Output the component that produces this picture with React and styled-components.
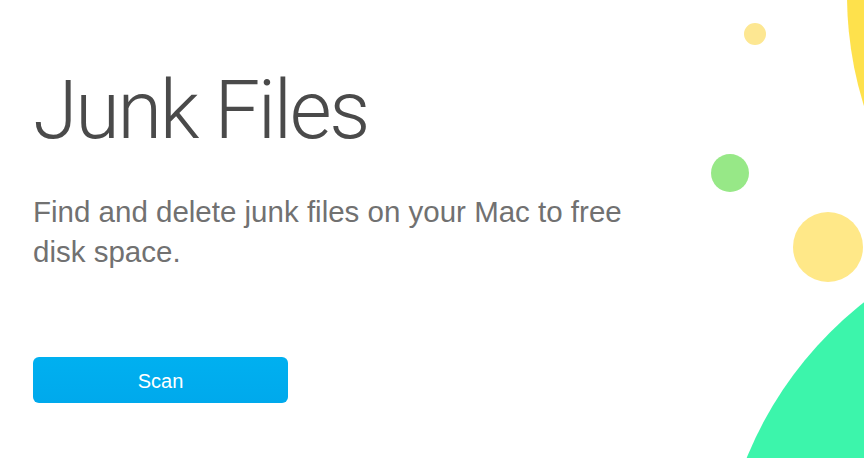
import styled, { createGlobalStyle } from "styled-components";

const GlobalStyle = createGlobalStyle`
  html, body {
    margin: 0;
    padding: 0;
    background: #fff;
  }
  * {
    box-sizing: border-box;
  }
`;

const Page = styled.div`
  position: relative;
  width: 864px;
  height: 458px;
  overflow: hidden;
  background: #fff;
  font-family: "Liberation Sans", Arial, sans-serif;
`;

const Content = styled.main`
  position: relative;
  z-index: 1;
  display: flex;
  flex-direction: column;
  align-items: flex-start;
  padding: 70px 0 0 33px;
`;

const Title = styled.h1`
  margin: 0;
  font-family: Roboto, "Liberation Sans", sans-serif;
  font-size: 81px;
  font-weight: 300;
  line-height: 1;
  letter-spacing: -2.3px;
  color: #4a4a4a;
`;

const Lead = styled.p`
  margin: 41px 0 0;
  max-width: 630px;
  font-size: 29.5px;
  font-weight: 400;
  line-height: 40px;
  color: #717171;
`;

const ScanButton = styled.button`
  margin-top: 85px;
  width: 255px;
  height: 46px;
  padding: 2px 0 0;
  border: none;
  border-radius: 6px;
  background: linear-gradient(#00b0f0, #00a9ec);
  color: #fff;
  font-family: inherit;
  font-size: 20px;
  font-weight: 400;
  cursor: pointer;
`;

const Decor = styled.svg`
  position: absolute;
  top: 0;
  left: 0;
  width: 864px;
  height: 458px;
  pointer-events: none;
`;

export default function App() {
  return (
    <>
      <GlobalStyle />
      <Page>
        <Decor viewBox="0 0 864 458">
          <defs>
            <linearGradient id="sun" x1="0" y1="0" x2="0" y2="1">
              <stop offset="0" stopColor="#fddc3c" />
              <stop offset="0.3" stopColor="#fee14c" />
            </linearGradient>
          </defs>
          <circle cx="1218" cy="-5" r="371" fill="url(#sun)" />
          <circle cx="755" cy="34" r="11" fill="#fde792" />
          <circle cx="730" cy="173" r="19" fill="#97e887" />
          <circle cx="828" cy="247" r="35" fill="#ffe888" />
          <circle cx="1097" cy="600" r="378" fill="#3cf5ab" />
        </Decor>
        <Content>
          <Title>Junk Files</Title>
          <Lead>Find and delete junk files on your Mac to free disk space.</Lead>
          <ScanButton>Scan</ScanButton>
        </Content>
      </Page>
    </>
  );
}
